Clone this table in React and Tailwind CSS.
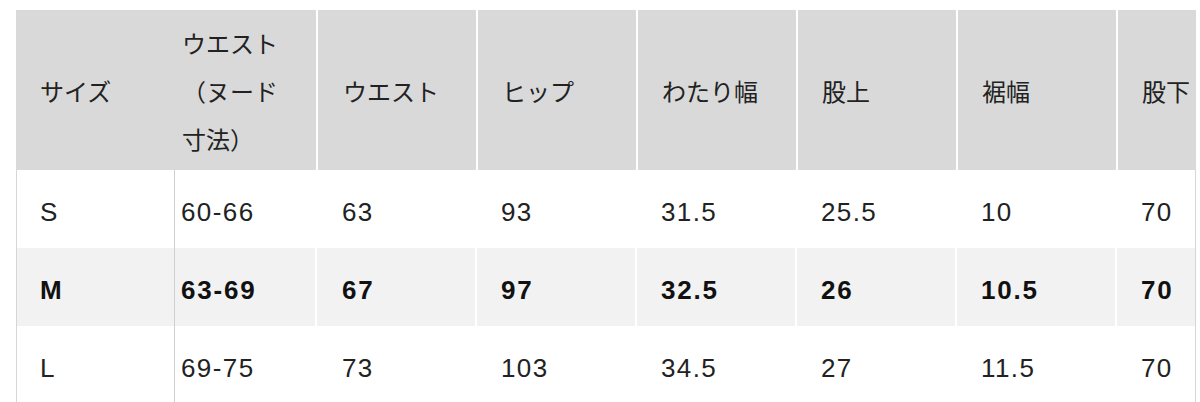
// Size chart table (pants): header in grey, M row highlighted in bold.
const cols = [
  { w: "w-[159px]", pl: "pl-[24px]" },
  { w: "w-[141px]", pl: "pl-[7px]" },
  { w: "w-[160px]", pl: "pl-[25px]" },
  { w: "w-[160px]", pl: "pl-[24px]" },
  { w: "w-[160px]", pl: "pl-[24px]" },
  { w: "w-[160px]", pl: "pl-[24px]" },
  { w: "w-[160px]", pl: "pl-[24px]" },
  { w: "w-[80px]", pl: "pl-[24px]" },
];

const headers = ["サイズ", null, "ウエスト", "ヒップ", "わたり幅", "股上", "裾幅", "股下"];

const rows = [
  { bold: false, cells: ["S", "60-66", "63", "93", "31.5", "25.5", "10", "70"] },
  { bold: true, cells: ["M", "63-69", "67", "97", "32.5", "26", "10.5", "70"] },
  { bold: false, cells: ["L", "69-75", "73", "103", "34.5", "27", "11.5", "70"] },
];

function HeaderRow() {
  return (
    <div className="flex h-[160px] bg-[#d9d9d9] text-[24px]">
      {headers.map((h, i) => (
        <div
          key={i}
          className={`${cols[i].w} ${cols[i].pl} pt-[5px] flex items-center shrink-0 ${i >= 2 ? "border-l-2 border-white" : ""}`}
        >
          {h === null ? (
            <div className="leading-[48px]">
              <div>ウエスト</div>
              <div>（ヌード</div>
              <div>寸法）</div>
            </div>
          ) : (
            <span>{h}</span>
          )}
        </div>
      ))}
    </div>
  );
}

function BodyRow({ row }) {
  return (
    <div
      className={`flex h-[78px] text-[26px] ${row.bold ? "bg-[#f2f2f2] font-bold text-[#111]" : "bg-white"} border-x border-[#d6d6d6]`}
    >
      {row.cells.map((c, i) => (
        <div
          key={i}
          className={`${cols[i].w} ${cols[i].pl} pt-[6px] flex items-center shrink-0 ${
            i === 0 ? "border-r border-[#cfcfcf] -ml-px" : ""
          } ${i === 1 ? "-ml-px" : ""} ${i >= 2 ? "border-l-2 border-white" : ""}`}
        >
          <span className={row.bold ? "tracking-[1.8px]" : "tracking-[1.4px]"}>{c}</span>
        </div>
      ))}
    </div>
  );
}

export default function App() {
  return (
    <div
      className="w-[1200px] h-[402px] overflow-hidden bg-white pl-[16px] pt-[10px] text-[#222]"
      style={{ fontFamily: '"Liberation Sans", "Noto Sans CJK JP", sans-serif' }}
    >
      <div className="w-[1180px]">
        <HeaderRow />
        {rows.map((r) => (
          <BodyRow key={r.cells[0]} row={r} />
        ))}
      </div>
    </div>
  );
}
